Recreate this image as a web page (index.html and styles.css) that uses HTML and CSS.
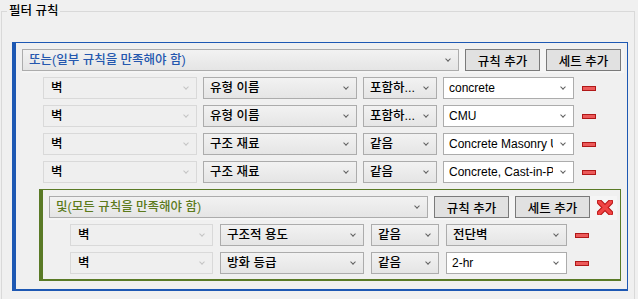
FILE: index.html
```html
<!DOCTYPE html>
<html>
  <head>
    <title>필터 규칙</title>
    <meta name="viewport" content="width=device-width, initial-scale=1.0" />
    <link rel="stylesheet" href="styles.css">
  </head>
  <body>
    <fieldset class="filter-group">
      <legend>필터 규칙</legend>

      <div class="rule-set set-or">
        <div class="set-head">
          <div class="combo set-combo"><span class="combo-text">또는(일부 규칙을 만족해야 함)</span></div>
          <button class="btn" type="button">규칙 추가</button>
          <button class="btn" type="button">세트 추가</button>
        </div>
        <div class="set-body">
          <div class="rule-row">
            <div class="combo col-cat is-disabled"><span class="combo-text">벽</span></div>
            <div class="combo col-param"><span class="combo-text">유형 이름</span></div>
            <div class="combo col-op"><span class="combo-text">포함하...</span></div>
            <div class="combo col-val is-edit"><span class="combo-text">concrete</span></div>
            <span class="remove-rule"></span>
          </div>
          <div class="rule-row">
            <div class="combo col-cat is-disabled"><span class="combo-text">벽</span></div>
            <div class="combo col-param"><span class="combo-text">유형 이름</span></div>
            <div class="combo col-op"><span class="combo-text">포함하...</span></div>
            <div class="combo col-val is-edit"><span class="combo-text">CMU</span></div>
            <span class="remove-rule"></span>
          </div>
          <div class="rule-row">
            <div class="combo col-cat is-disabled"><span class="combo-text">벽</span></div>
            <div class="combo col-param"><span class="combo-text">구조 재료</span></div>
            <div class="combo col-op"><span class="combo-text">같음</span></div>
            <div class="combo col-val is-edit"><span class="combo-text">Concrete Masonry Units</span></div>
            <span class="remove-rule"></span>
          </div>
          <div class="rule-row">
            <div class="combo col-cat is-disabled"><span class="combo-text">벽</span></div>
            <div class="combo col-param"><span class="combo-text">구조 재료</span></div>
            <div class="combo col-op"><span class="combo-text">같음</span></div>
            <div class="combo col-val is-edit"><span class="combo-text">Concrete, Cast-in-Place</span></div>
            <span class="remove-rule"></span>
          </div>

          <div class="rule-set set-and">
            <div class="set-head">
              <div class="combo set-combo"><span class="combo-text">및(모든 규칙을 만족해야 함)</span></div>
              <button class="btn" type="button">규칙 추가</button>
              <button class="btn" type="button">세트 추가</button>
              <svg class="remove-set" width="16" height="15" viewBox="0 0 16 15">
                <path d="M2.5 2 L13.5 13 M13.5 2 L2.5 13" stroke="#b81414" stroke-width="5.5" stroke-linecap="round" />
                <path d="M2.5 2 L13.5 13 M13.5 2 L2.5 13" stroke="#f04444" stroke-width="3.5" stroke-linecap="round" />
              </svg>
            </div>
            <div class="set-body">
              <div class="rule-row">
                <div class="combo col-cat is-disabled"><span class="combo-text">벽</span></div>
                <div class="combo col-param"><span class="combo-text">구조적 용도</span></div>
                <div class="combo col-op"><span class="combo-text">같음</span></div>
                <div class="combo col-val"><span class="combo-text">전단벽</span></div>
                <span class="remove-rule"></span>
              </div>
              <div class="rule-row">
                <div class="combo col-cat is-disabled"><span class="combo-text">벽</span></div>
                <div class="combo col-param"><span class="combo-text">방화 등급</span></div>
                <div class="combo col-op"><span class="combo-text">같음</span></div>
                <div class="combo col-val is-edit"><span class="combo-text">2-hr</span></div>
                <span class="remove-rule"></span>
              </div>
            </div>
          </div>
        </div>
      </div>
    </fieldset>
  </body>
</html>
```

FILE: styles.css
```css
body {
  font-family: "Liberation Sans", "Noto Sans CJK KR", sans-serif;
  font-size: 12.5px;
  font-weight: 500;
  color: #000;
  background: #f0f0f0;
  margin: 0;
  padding: 0;
}
.filter-group {
  margin: 3px 3px 0 1px;
  padding: 0 0 20px 0;
  border: 1px solid #d9d9d9;
  min-width: 0;
}
.filter-group legend {
  margin-left: 5px;
  padding: 0 2px;
  line-height: 16px;
}
.rule-set {
  display: flex;
  flex-direction: column;
  border-style: solid;
  border-width: 1px 1px 2px 4px;
  padding-left: 6px;
}
.set-or {
  margin: 23px 6px 0 10px;
  padding-top: 6px;
  padding-bottom: 8px;
  border-color: #1d58b3;
}
.set-and {
  margin-right: 6px;
  padding-top: 6px;
  padding-bottom: 5px;
  border-color: #5a7a26;
}
.set-head {
  display: flex;
  align-items: center;
  gap: 6px;
  background: #f5f5f5;
  padding: 0 3px 2px 0;
  margin: 0 3px 4px 0;
}
.set-or .set-combo {
  width: 437px;
  color: #2457ae;
}
.set-and .set-combo {
  width: 379px;
  color: #5c7a1c;
}
.set-and .set-head {
  padding-right: 4px;
}
.set-body {
  display: flex;
  flex-direction: column;
  gap: 6px;
  padding-left: 17px;
}
.rule-row {
  display: flex;
  align-items: center;
  gap: 6px;
  padding-left: 4px;
}
.set-and .rule-row {
  gap: 7px;
}
.combo {
  display: flex;
  align-items: center;
  box-sizing: border-box;
  height: 22px;
  padding: 0 8px 0 6px;
  border: 1px solid #acacac;
  background: linear-gradient(#f2f2f2, #e5e5e5);
}
.combo::after {
  content: "";
  flex: none;
  width: 3px;
  height: 3px;
  border-right: 1px solid #606060;
  border-bottom: 1px solid #606060;
  transform: rotate(45deg);
  margin-top: -3px;
}
.combo-text {
  flex: 1;
  overflow: hidden;
  white-space: nowrap;
  margin-right: 8px;
  line-height: 20px;
}
.combo.is-disabled {
  border-color: #d9d9d9;
  background: #efefef;
  padding-left: 7px;
}
.combo.is-disabled::after {
  border-color: #c4c4c4;
}
.combo.is-edit {
  background: #fff;
  padding-left: 5px;
  font-size: 12px;
}
.col-cat { width: 154px; }
.col-param { width: 154px; }
.col-op { width: 74px; }
.col-val { width: 131px; }
.set-and .col-cat { width: 143px; }
.set-and .col-param { width: 144px; }
.set-and .col-op { width: 68px; }
.set-and .col-val { width: 121px; }
.btn {
  box-sizing: border-box;
  width: 75px;
  height: 22px;
  padding: 0;
  border: 1px solid #7a7a7a;
  background: #e1e1e1;
  font-family: inherit;
  font-size: inherit;
  font-weight: inherit;
  color: #000;
}
.remove-rule {
  display: block;
  box-sizing: border-box;
  width: 14px;
  height: 5px;
  margin-left: 2px;
  border: 1px solid #b01818;
  background: #ec5a5a;
}
.set-and .remove-rule {
  margin-left: 1px;
}
.remove-set {
  margin-left: 1px;
}
```
